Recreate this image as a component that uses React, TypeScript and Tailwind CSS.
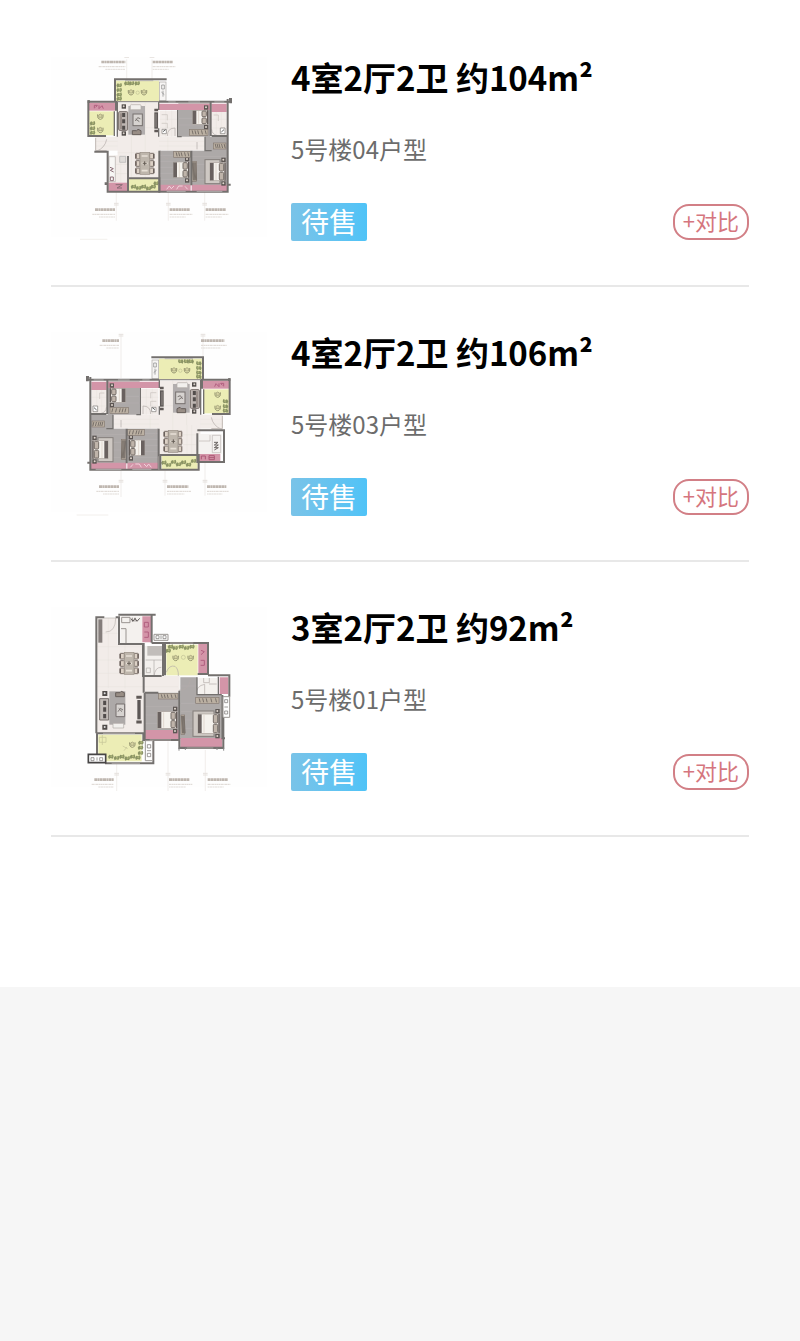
import React from 'react';

interface Unit {
  id: string;
  title: string;
  room: string;
  status: string;
  plan: React.FC;
}

const WALL = '#65615f';
const PINK = '#cf8a9f';
const GREEN = '#ebecae';
const FLOOR = '#a5a09f';

interface BoxProps {
  x: number;
  y: number;
  w: number;
  h: number;
}

// Double bed with the headboard on the right side
const Bed: React.FC<BoxProps & { rug?: boolean }> = ({ x, y, w, h, rug }) => (
  <g>
    {rug && <rect x={x - 15} y={y - 9} width={w} height={h + 18} fill="#c9c3bd" stroke="#77706d" strokeWidth={3} />}
    <rect x={x} y={y} width={w} height={h} fill="#f5f1ec" stroke="#a49b94" strokeWidth={2} />
    <rect x={x} y={y + 1} width={11} height={h - 2} fill="#59514e" />
    <path d={`M${x + 18} ${y + 2}v${h - 4}`} stroke="#ded5cb" strokeWidth={3} />
    <rect x={x + w - 17} y={y + 2} width={13} height={h / 2 - 4} rx={3} fill="#b9aca1" stroke="#675e58" strokeWidth={3} />
    <rect x={x + w - 17} y={y + h / 2 + 2} width={13} height={h / 2 - 4} rx={3} fill="#b9aca1" stroke="#675e58" strokeWidth={3} />
    <path d={`M${x + w} ${y}v${h}`} stroke="#554c48" strokeWidth={4} />
    {[y - 15, y + h + 2].map((ny) => (
      <g key={ny}>
        <rect x={x + w - 11} y={ny} width={13} height={13} fill="#4b4441" />
        <circle cx={x + w - 5} cy={ny + 6} r={3} fill="#ddd2c9" />
      </g>
    ))}
  </g>
);

const Armchair: React.FC<{ x: number; y: number }> = ({ x, y }) => (
  <g transform={`translate(${x} ${y})`} fill="none" stroke="#8c8b62" strokeWidth={3}>
    <path d="M-8 -6Q-10 8 0 9Q10 8 8 -6" />
    <path d="M-5 -4Q0 -10 5 -4V3H-5Z" fill="#d2cf98" strokeWidth={2} />
  </g>
);

// Row of bushes along a balcony edge
const Hedge: React.FC<{ points: number[][] }> = ({ points }) => (
  <g>
    {points.map(([x, y], i) => (
      <g key={i}>
        <path d={`M${x - 8} ${y}l4 -6 5 2 6 -3 2 7 -3 6 -6 -2 -5 3z`} fill="#7f8955" />
        <circle cx={x + 2} cy={y - 1} r={3} fill="#a4ad69" />
      </g>
    ))}
  </g>
);

const DiningTable: React.FC<{ x: number; y: number }> = ({ x, y }) => (
  <g transform={`translate(${x} ${y})`}>
    {[0, 22, 44].map((cy) => (
      <g key={cy}>
        <rect x={0} y={cy} width={13} height={17} rx={2} fill="#d9cdc0" stroke="#6e625c" strokeWidth={3} />
        <rect x={42} y={cy} width={13} height={17} rx={2} fill="#d9cdc0" stroke="#6e625c" strokeWidth={3} />
        <path d={`M1 ${cy + 2}v13M54 ${cy + 2}v13`} stroke="#5b4f4a" strokeWidth={4} />
      </g>
    ))}
    <rect x={13} y={-3} width={29} height={66} fill="#b8afa4" stroke="#8d8379" strokeWidth={2} />
    <path d="M18 8h18M18 30h18M18 52h18" stroke="#e5ddd2" strokeWidth={5} />
    <path d="M27 24v12M21 30h12" stroke="#534b43" strokeWidth={3} />
  </g>
);

// Sofa set, seen with the long sofa on the left and the TV on the right
const Lounge: React.FC = () => (
  <g>
    <rect x={250} y={168} width={50} height={86} fill="#aaa6a6" />
    <rect x={221} y={185} width={27} height={56} rx={3} fill="#b8afaa" stroke="#655b57" strokeWidth={3} />
    <path d="M236 189v12M236 208v12M236 227v12" stroke="#403a38" strokeWidth={9} />
    <path d="M228 190v47" stroke="#7d6f68" strokeWidth={4} />
    <rect x={264} y={192} width={28} height={35} fill="#d3cfcc" stroke="#68615f" strokeWidth={3} />
    <path d="M271 213l7 -10 8 3M272 207l11 8" fill="none" stroke="#6c6562" strokeWidth={3} />
    <rect x={256} y={164} width={32} height={15} rx={3} fill="#f1efec" stroke="#aaa39e" strokeWidth={2} />
    <path d="M262 254v-12h13l4 -4 9 4v12z" fill="#8d8178" stroke="#574e4a" strokeWidth={3} />
    {[169, 250].map((y) => (
      <g key={y}>
        <rect x={230} y={y - 6} width={13} height={13} fill="#3f3937" />
        <circle cx={236} cy={y} r={3} fill="#d6cdc5" />
      </g>
    ))}
    <rect x={328} y={187} width={11} height={49} fill="#4b4644" />
    <path d="M333 191v41" stroke="#8c8480" strokeWidth={3} />
    <path d="M328 180h11M328 243h11" stroke="#4f4845" strokeWidth={7} />
  </g>
);

const Wardrobe: React.FC<BoxProps> = ({ x, y, w, h }) => (
  <g>
    <rect x={x} y={y} width={w} height={h} fill="#b4a899" stroke="#786c63" strokeWidth={2} />
    {[0.15, 0.3, 0.45, 0.65, 0.85].map((t) => (
      <path key={t} d={`M${x + w * t} ${y + 3}l3 ${h - 6}`} stroke="#6b625b" strokeWidth={3} />
    ))}
  </g>
);

const TileFloor: React.FC<BoxProps> = ({ x, y, w, h }) => (
  <g>
    <rect x={x} y={y} width={w} height={h} fill="#f1ebe7" />
    <path
      d={`M${x} ${y + h / 3}h${w}M${x} ${y + (h * 2) / 3}h${w}M${x + w / 3} ${y}v${h}M${x + (w * 2) / 3} ${y}v${h}`}
      stroke="#e1dad5"
      strokeWidth={1}
    />
  </g>
);

const Caption: React.FC<{ x: number; y: number; w: number; line: number; from: number; to: number; right?: boolean }> = ({
  x,
  y,
  w,
  line,
  from,
  to,
  right,
}) => (
  <g fill="none">
    <path d={`M${line} ${from}V${to}`} stroke="#e9e4e1" strokeWidth={2} />
    <path d={`M${line - 7} ${y - 19}h14M${line - 7} ${y - 14}h14`} stroke="#e3deda" strokeWidth={3} />
    <path d={`M${x} ${y}h${w}`} stroke="#b9b0a8" strokeWidth={8} strokeDasharray="9 1 6 1 8 1" />
    <path d={`M${right ? x - 8 : x} ${y + 14}h${w + 8}`} stroke="#d8d2cc" strokeWidth={3} strokeDasharray="7 1 4 1" />
    <path d={`M${right ? x + 12 : x} ${y + 22}h${w - 12}`} stroke="#dfdad5" strokeWidth={3} strokeDasharray="5 1 8 1" />
  </g>
);

const PlanFrame: React.FC<{ label: string; children: React.ReactNode }> = ({ label, children }) => (
  <svg viewBox="18 21 648 552" className="w-54 shrink-0" role="img" aria-label={label}>
    <rect x={18} y={21} width={648} height={540} fill="#fefefe" />
    <g opacity={0.9}>{children}</g>
  </svg>
);

// Bedrooms, living room and upper balconies shared by both four-room units
const FourRoomBody: React.FC = () => (
  <g>
    <TileFloor x={150} y={260} w={328} h={42} />
    <TileFloor x={218} y={158} w={124} h={225} />
    <path d="M400 160h96v100h-96zM343 302h94v104h-94zM440 302h108v104H440zM480 260h68v46h-68z" fill={FLOOR} />
    <path d="M343 316h94M343 334h94M343 352h94M343 370h94M343 388h94M440 320h108M440 343h108M440 366h108M440 389h108M400 205h90M400 225h90" stroke="#b8b3b2" strokeWidth={1} />
    <TileFloor x={344} y={182} w={54} h={78} />
    <TileFloor x={499} y={182} w={45} h={78} />
    <path d="M342 161h155v19H342zM499 161h46v25h-46zM345 404h92v20h-92zM440 404h108v20H440z" fill={PINK} />
    <path d="M365 418l8-10 6 8 8-8M395 418l6-10h12M420 409l8 9" fill="none" stroke="#f0ced8" strokeWidth={3} />
    <rect x={212} y={92} width={130} height={62} fill={GREEN} />
    <rect x={343} y={96} width={20} height={56} fill="#f7f5f3" stroke="#a39e9b" strokeWidth={2} />
    <path d="M350 105h8v12h-8zM354 122v18M349 126l9 8" fill="none" stroke="#777" strokeWidth={2} />
    <rect x={132} y={184} width={78} height={72} fill={GREEN} />
    <rect x={132} y={158} width={78} height={24} fill={PINK} />
    <path d="M148 175v-9h9l-5 6M162 166v10l9-9 4 9" fill="none" stroke="#a94e72" strokeWidth={3} />
    <Hedge points={[[222, 106], [222, 120], [222, 134], [222, 146], [245, 100], [259, 100], [276, 100], [142, 220], [142, 235], [142, 248]]} />
    <Armchair x={258} y={126} />
    <Armchair x={297} y={126} />
    <circle cx={278} cy={128} r={5} fill="none" stroke="#b8b888" strokeWidth={2} />
    <Armchair x={166} y={199} />
    <Armchair x={166} y={239} />
    <Lounge />
    <DiningTable x={272} y={310} />
    <Bed x={443} y={181} w={45} h={42} />
    <Bed x={385} y={336} w={46} h={47} />
    <Bed x={495} y={338} w={45} h={54} rug />
    <Wardrobe x={433} y={238} w={56} h={18} />
    <Wardrobe x={386} y={304} w={50} h={18} />
    <Wardrobe x={505} y={279} w={38} h={18} />
    <Wardrobe x={440} y={334} w={14} h={60} />
    <path d="M350 194h17v17M350 220h17v15M506 195h14v18" fill="none" stroke="#c2bbb7" strokeWidth={2} />
    <path d="M351 238h13v13h-13zM526 234h14v17h-14z" fill="#fff" stroke="#6d6865" strokeWidth={2} />
    <path d="M354 245l8-6M529 246l8-7" stroke="#555" strokeWidth={3} />
    <path d="M367 258Q367 234 390 234V258M517 257Q500 252 500 238M154 304Q180 294 185 268M346 302Q352 326 370 327M456 276v22" fill="none" stroke="#aaa29e" strokeWidth={2} />
    <g fill="none" stroke={WALL} strokeWidth={6}>
      <path d="M210 155V88H365M210 155H218M128 155H213V182M130 151V258H183" />
      <path d="M342 155H557M548 147V404H557M548 404V425H343V302M439 302V406M497 158V258M548 258H500" />
      <path d="M208 184V258M217 155V260M341 155V180M341 235V260M398 180V260H410M480 260V302H500" strokeWidth={4} />
      <path d="M218 155H342M343 425V385" stroke="#898480" strokeWidth={4} />
      <path d="M128 155h7M552 148h5v12" strokeWidth={8} />
    </g>
    <path d="M240 92H325M370 156H392M430 156H465M508 156H538M365 424H422M455 424H532" stroke="#aaa7a5" strokeWidth={3} />
    <path d="M152 264V302H185" fill="none" stroke="#bbb2ae" strokeWidth={3} />
  </g>
);

const PlanA: React.FC = () => (
  <PlanFrame label="5号楼04户型">
    <Caption x={169} y={36} w={72} line={245} from={28} to={95} right />
    <Caption x={323} y={36} w={60} line={321} from={28} to={95} />
    <Caption x={150} y={479} w={60} line={214} from={426} to={512} right />
    <Caption x={374} y={479} w={60} line={370} from={426} to={512} />
    <Caption x={482} y={479} w={60} line={479} from={426} to={512} />
    <FourRoomBody />
    <TileFloor x={190} y={316} w={56} h={82} />
    <path d="M190 398h56v26h-56z" fill={PINK} />
    <path d="M192 320h19v75h-19z" fill="#f8f7f5" stroke="#aaa4a0" strokeWidth={2} />
    <path d="M195 352l10 4-9 5 10 5M196 381h9v11h-9zM212 404h20l-16 10h15" fill="none" stroke="#7d5c66" strokeWidth={3} />
    <path d="M224 319h18v18h-18z" fill="#ddd9d6" stroke="#aaa" strokeWidth={2} />
    <path d="M252 386h88v38h-88z" fill={GREEN} />
    <Hedge points={[[265, 410], [280, 414], [295, 410], [310, 415], [324, 410], [333, 400]]} />
    <path d="M148 305H188V425H249M249 318V425H343V385H252M182 397V405" fill="none" stroke={WALL} strokeWidth={6} />
    <path d="M105 568H187" stroke="#ece7e3" strokeWidth={2} />
  </PlanFrame>
);

const PlanB: React.FC = () => (
  <PlanFrame label="5号楼03户型">
    <Caption x={172} y={47} w={50} line={228} from={28} to={160} right />
    <Caption x={468} y={47} w={70} line={474} from={28} to={160} />
    <Caption x={162} y={485} w={60} line={228} from={436} to={516} right />
    <Caption x={366} y={485} w={64} line={360} from={436} to={512} />
    <Caption x={486} y={485} w={58} line={480} from={412} to={512} />
    <g transform="translate(684 9) scale(-1 1)">
      <FourRoomBody />
    </g>
    <TileFloor x={412} y={300} w={42} h={88} />
    <path d="M460 327h70v60h-70z" fill="#f4f1ef" />
    <path d="M460 387h66v23h-66z" fill={PINK} />
    <path d="M462 348h33v-18M502 331h25v52h-25z" fill="none" stroke="#b5afab" strokeWidth={2} />
    <path d="M507 352h12l-11 8h12l-12 8h12l-12 7" fill="none" stroke="#595451" strokeWidth={3} />
    <path d="M469 403v-10h12v10M492 392h16v12h-16zM492 398h16" fill="none" stroke="#a34667" strokeWidth={3} />
    <path d="M350 393h108v40H350z" fill={GREEN} />
    <Hedge points={[[356, 413], [370, 420], [385, 411], [400, 418], [415, 412], [430, 419], [445, 408]]} />
    <path d="M346 390H461V434H346zM457 316H537V411H457V325" fill="none" stroke={WALL} strokeWidth={6} />
    <path d="M95 570H190" stroke="#ece7e3" strokeWidth={2} />
  </PlanFrame>
);

const PlanC: React.FC = () => (
  <PlanFrame label="5号楼01户型">
    <Caption x={148} y={539} w={58} line={215} from={492} to={574} right />
    <Caption x={372} y={539} w={62} line={369} from={424} to={574} />
    <Caption x={488} y={539} w={60} line={481} from={450} to={574} />
    <path d="M154 54h64v78h78v96h108v50H298v121H154z" fill="#f1ebe7" />
    <path d="M154 100h64M154 140h140M154 180h140M154 220h245M154 260h245M190 54v210M240 135v130" stroke="#e2dbd6" strokeWidth={1} />
    <path d="M300 278h102v114H300zM406 232h50v50h74v135H406z" fill={FLOOR} />
    <path d="M300 320h102M300 345h102M300 370h102M406 258h50M406 310h124M406 335h124M406 360h124M406 385h124" stroke="#b8b3b2" strokeWidth={1} />
    <rect x={160} y={58} width={12} height={70} fill="#77706d" />
    <path d="M178 54h34M212 54Q212 96 182 96" fill="none" stroke="#b4aca7" strokeWidth={2} />
    <rect x={226} y={49} width={66} height={81} fill="#f4f0ed" />
    <path d="M230 52h25v16h-25zM228 86h15v44M262 53v12M270 53v12" fill="none" stroke="#8f8985" strokeWidth={3} />
    <path d="M258 56l6 8 6-9 6 9 8-9" fill="none" stroke="#4f4a48" strokeWidth={3} />
    <path d="M292 49h26v78h-26zM460 132h26v88h-26zM524 232h26v50h-26z" fill={PINK} />
    <path d="M298 67h12v14h-12zM298 96h12v16h-12M468 151l10 4-10 9M467 181h11v15h-11" fill="none" stroke="#a94e72" strokeWidth={3} />
    <path d="M298 390h104v30H298zM406 414h126v30H406z" fill={PINK} />
    <rect x={300} y={138} width={52} height={90} fill="#f2efec" />
    <rect x={307} y={138} width={45} height={29} fill="#bbb6b3" />
    <path d="M302 180h48M327 180v46M304 204h12v14h-12z" fill="none" stroke="#a6a09d" strokeWidth={2} />
    <rect x={364} y={134} width={94} height={92} fill={GREEN} />
    <Hedge points={[[376, 140], [390, 144], [408, 140], [424, 144], [440, 140], [369, 152]]} />
    <Armchair x={392} y={173} />
    <Armchair x={437} y={173} />
    <circle cx={415} cy={172} r={6} fill="none" stroke="#b8b888" strokeWidth={2} />
    <DiningTable x={225} y={160} />
    <g transform="translate(-57 106)">
      <path d="M250 168h48v100h-48z" fill={FLOOR} />
      <path d="M221 190h27v64h-27z" fill="#bcb5b0" stroke="#665e5b" strokeWidth={3} />
      <path d="M236 196v13M236 216v13M236 236v13" stroke="#403a38" strokeWidth={9} />
      <path d="M270 206h26v38h-26z" fill="#d3cfcc" stroke="#68615f" strokeWidth={3} />
      <path d="M276 229l7-10 8 5M278 219l10 10" fill="none" stroke="#6c6562" strokeWidth={3} />
      <path d="M269 184v-12h13l4-4 9 4v12z" fill="#8d8178" stroke="#574e4a" strokeWidth={3} />
      <path d="M261 264h32v14h-32z" fill="#f1efec" stroke="#aaa39e" strokeWidth={2} />
      <path d="M229 167h15v15h-15zM229 268h15v15h-15z" fill="#3f3937" />
      <circle cx={236} cy={174} r={3} fill="#ddd" />
      <circle cx={236} cy={275} r={3} fill="#ddd" />
      <path d="M334 194h10v58h-10z" fill="#4b4644" />
      <path d="M331 186h16M331 260h16" stroke="#4f4845" strokeWidth={9} />
    </g>
    <Bed x={338} y={335} w={57} h={50} />
    <Bed x={459} y={342} w={63} h={58} rug />
    <Wardrobe x={340} y={280} w={59} h={17} />
    <Wardrobe x={452} y={292} w={70} h={18} />
    <Wardrobe x={408} y={345} w={11} h={58} />
    <rect x={460} y={234} width={56} height={48} fill="#f3f0ed" />
    <path d="M476 234v14h17v-14M492 252h23M453 285Q453 257 479 253V282M402 271Q432 271 436 238M364 217Q372 194 390 199Q401 207 400 228M327 229Q330 201 349 202" fill="none" stroke="#aaa29e" strokeWidth={2} />
    <rect x={160} y={404} width={130} height={80} fill={GREEN} />
    <path d="M163 412h20v15h-20zM172 405v30M248 446l-15-8M237 452l9-11" fill="none" stroke="#bdbd8c" strokeWidth={2} />
    <Hedge points={[[197, 470], [214, 474], [230, 470], [246, 475], [262, 470], [278, 473], [286, 459], [286, 443], [287, 428]]} />
    <Armchair x={262} y={433} />
    <g fill="none" stroke={WALL} strokeWidth={6}>
      <path d="M178 52H154V400M212 52H222V132H296V278M220 44H332M320 47V128M294 132V228H350M354 132V228M320 129H489V222H458M360 132V226" />
      <path d="M300 278H340M403 272V443H535V352M299 278V420H403M489 226H553V290M532 285V415H540M400 444H538" />
      <path d="M456 232V284H530M520 230V282" strokeWidth={4} />
      <path d="M154 400H295V420H325V490H180M156 400V462" />
      <path d="M130 463H182V488H130z" fill="#fff" stroke="#343131" strokeWidth={5} />
    </g>
    <path d="M327 103h42v18h-42zM301 422h22v60h-22zM534 290h20v62h-20z" fill="#fff" stroke="#918c89" strokeWidth={3} />
    <path d="M333 107h9v9h-9zM354 107h9v9h-9zM348 106v11M307 434h10v10h-10zM307 460h10v10h-10zM306 452h12M539 299h9v9h-9zM539 333h9v9h-9zM538 321h11M138 473h9v9h-9zM164 473h9v9h-9zM156 472v10" fill="none" stroke="#625e5c" strokeWidth={2} />
    <path d="M402 443v9M421 443v7M516 443v7M536 443v9" stroke="#777" strokeWidth={3} />
    <path d="M174 400H270M200 490H285M314 420H378M425 444H505M375 129H445" stroke="#bbb7b4" strokeWidth={2} />
  </PlanFrame>
);

const UNITS: Unit[] = [
  { id: '504', title: '4室2厅2卫 约104m²', room: '5号楼04户型', status: '待售', plan: PlanA },
  { id: '503', title: '4室2厅2卫 约106m²', room: '5号楼03户型', status: '待售', plan: PlanB },
  { id: '501', title: '3室2厅2卫 约92m²', room: '5号楼01户型', status: '待售', plan: PlanC },
];

const UnitRow: React.FC<{ unit: Unit }> = ({ unit }) => {
  const Plan = unit.plan;
  return (
    <li className="flex items-start gap-6 border-b-2 border-[#e8e8e8] pt-[45px] pb-11">
      <Plan />
      <div className="flex min-w-0 flex-1 flex-col self-stretch">
        <h2 className="text-[33px] leading-10 font-bold text-black">{unit.title}</h2>
        <p className="mt-8 text-2xl leading-10 text-[#6c6c6c]">{unit.room}</p>
        <div className="mt-auto flex items-center justify-between">
          <span className="rounded-xs bg-linear-to-r from-[#79c3e8] to-[#4fc3f7] px-[10px] pb-[2px] text-[28px] leading-9 text-white">
            {unit.status}
          </span>
          <button
            type="button"
            className="rounded-2xl border-2 border-[#d27f86] px-2 pb-1 text-[22px] leading-7 text-[#d5767e]"
          >
            +对比
          </button>
        </div>
      </div>
    </li>
  );
};

export default function App() {
  return (
    <div className="min-h-screen bg-[#f6f6f6] font-['Noto_Sans_CJK_SC',sans-serif]">
      <main className="bg-white px-[51px] pt-3 pb-[150px]">
        <ul>
          {UNITS.map((unit) => (
            <UnitRow key={unit.id} unit={unit} />
          ))}
        </ul>
      </main>
    </div>
  );
}
